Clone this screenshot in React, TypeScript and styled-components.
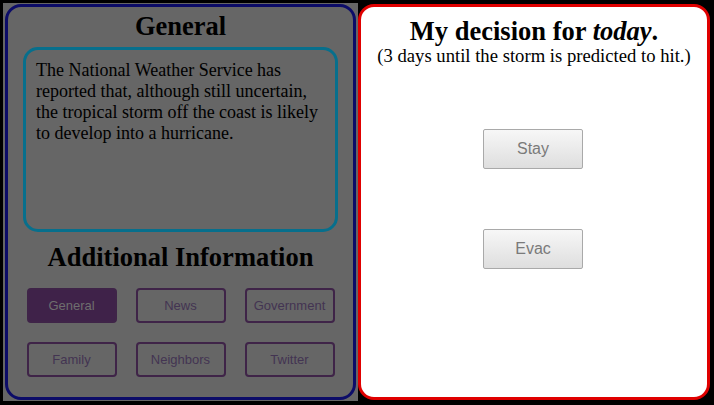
import React from "react";
import styled, { createGlobalStyle } from "styled-components";

const Global = createGlobalStyle`
  html, body { margin: 0; padding: 0; background: #000; }
  * { box-sizing: border-box; }
`;

const Frame = styled.div`
  width: 714px;
  height: 405px;
  background: #000;
  padding: 3px 4px 4px 3px;
  display: flex;
  font-family: "Liberation Serif", "Times New Roman", serif;
`;

const LeftArea = styled.div`
  width: 355px;
  background: #666666;
  padding: 1px 2px 1px 2px;
  display: flex;
`;

const Panel = styled.section<{ $border: string; $bg: string }>`
  flex: 1;
  border: 3px solid ${(p) => p.$border};
  border-radius: 16px;
  background: ${(p) => p.$bg};
  display: flex;
  flex-direction: column;
  align-items: center;
`;

const RightPanel = styled(Panel)`
  margin-top: 1px;
  margin-bottom: 1px;
`;

const Heading = styled.h2<{ $top: number }>`
  margin: ${(p) => p.$top}px 0 0 0;
  font-size: 26.5px;
  font-weight: bold;
  line-height: 31px;
  color: #000;
  text-align: center;
`;

const InfoBox = styled.div`
  align-self: stretch;
  margin: 5px 15px 0 15px;
  height: 185px;
  border: 3px solid #076f8c;
  border-radius: 15px;
  padding: 10px 10px;
  font-size: 18px;
  color: #000;
`;

const ButtonGrid = styled.div`
  margin-top: 15px;
  display: grid;
  grid-template-columns: repeat(3, 90px);
  column-gap: 19px;
  row-gap: 19px;
`;

const TabButton = styled.button<{ $active?: boolean }>`
  height: 35px;
  border: 2px solid #3f2448;
  border-radius: 4px;
  background: ${(p) => (p.$active ? "#3f2249" : "transparent")};
  color: ${(p) => (p.$active ? "#6e6e6e" : "#433452")};
  font-family: "Liberation Sans", Arial, sans-serif;
  font-size: 13px;
  padding: 0;
  cursor: pointer;
`;

const DecisionTitle = styled.h1`
  margin: 10px 0 0 0;
  font-size: 26.5px;
  line-height: 28px;
  font-weight: bold;
  color: #000;
  text-align: center;
`;

const Subtitle = styled.div`
  font-size: 18.67px;
  line-height: 21px;
  color: #000;
  text-align: center;
`;

const ChoiceList = styled.div`
  margin-top: 63px;
  display: flex;
  flex-direction: column;
  align-items: center;
  gap: 60px;
  transform: translateX(-1px);
`;

const ChoiceButton = styled.button`
  width: 100px;
  height: 40px;
  border: 1px solid #a9a9a9;
  border-radius: 2px;
  background: linear-gradient(#f7f7f7, #dedede);
  color: #7a7a7a;
  font-family: "Liberation Sans", Arial, sans-serif;
  font-size: 16px;
  padding: 0;
  cursor: pointer;
`;

const tabs = ["General", "News", "Government", "Family", "Neighbors", "Twitter"];

export default function App() {
  return (
    <>
      <Global />
      <Frame>
        <LeftArea>
          <Panel $border="#0c0c68" $bg="#666666">
            <Heading $top={4}>General</Heading>
            <InfoBox>
              The National Weather Service has reported that, although still uncertain,
              the tropical storm off the coast is likely to develop into a hurricane.
            </InfoBox>
            <Heading $top={10}>Additional Information</Heading>
            <ButtonGrid>
              {tabs.map((t, i) => (
                <TabButton key={t} $active={i === 0}>
                  {t}
                </TabButton>
              ))}
            </ButtonGrid>
          </Panel>
        </LeftArea>
        <RightPanel $border="#e00000" $bg="#ffffff">
          <DecisionTitle>
            My decision for <em>today</em>.
          </DecisionTitle>
          <Subtitle>(3 days until the storm is predicted to hit.)</Subtitle>
          <ChoiceList>
            <ChoiceButton>Stay</ChoiceButton>
            <ChoiceButton>Evac</ChoiceButton>
          </ChoiceList>
        </RightPanel>
      </Frame>
    </>
  );
}
